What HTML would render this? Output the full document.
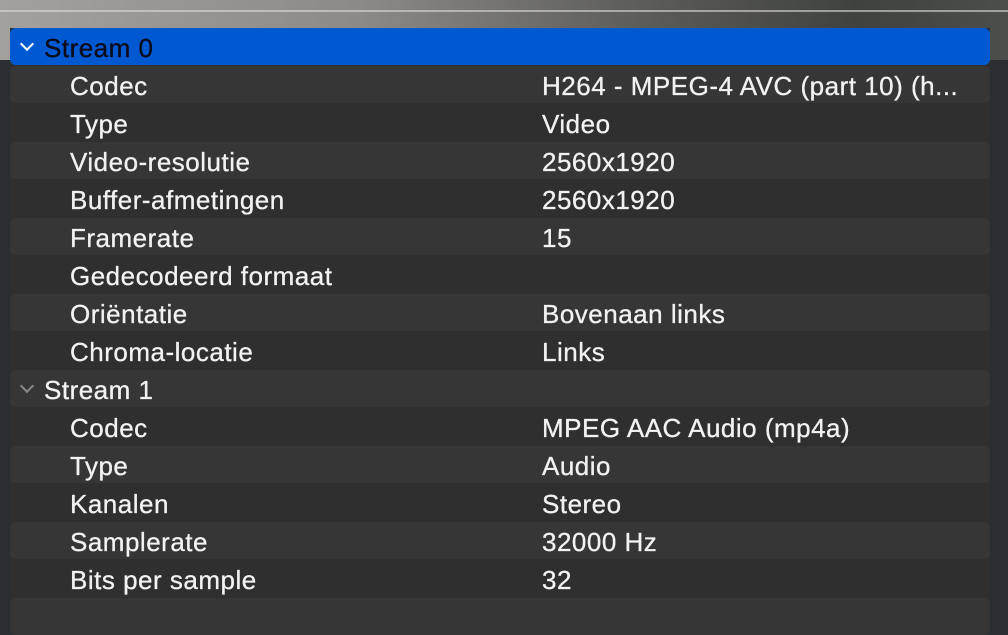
<!DOCTYPE html>
<html><head><meta charset="utf-8"><style>
html,body{margin:0;width:1008px;height:630px;overflow:hidden;background:#2b2e31;font-family:"Liberation Sans",sans-serif;}
.top{position:absolute;left:0;top:0;width:1008px;height:60px;background:linear-gradient(90deg,#a3a19c 0%,#8d8b86 35%,#5a5a56 65%,#3f423f 85%,#4a4f4c 100%);}
.line{position:absolute;left:0;top:10px;width:1008px;height:2px;background:rgba(220,220,215,.6);}
.panel{position:absolute;left:10px;top:28px;width:980px;height:602px;background:#2f2f2f;}
.row{position:absolute;left:10px;width:980px;height:37px;border-radius:6px;color:#f2f2f2;font-size:26px;letter-spacing:0.5px;line-height:41px;-webkit-text-stroke:0.3px currentColor;}
.alt{background:#363636;}
.sel{background:#0059d1;color:#0b0b1a;}
.l{position:absolute;left:60px;}
.v{position:absolute;left:532px;}
.s{position:absolute;left:34px;}
.chev{position:absolute;left:12px;width:8px;height:8px;border-right:2px solid #fff;border-bottom:2px solid #fff;transform:rotate(45deg);top:11px;}
.chev.g{border-color:#8a8a8a;}
</style></head><body>
<div class="top"></div><div class="line"></div>
<div class="panel"></div>
<div class="row sel" style="top:28px"><div class="chev"></div><span class="s">Stream 0</span></div>
<div class="row alt" style="top:66px"><span class="l">Codec</span><span class="v">H264 - MPEG-4 AVC (part 10) (h...</span></div>
<div class="row" style="top:104px"><span class="l">Type</span><span class="v">Video</span></div>
<div class="row alt" style="top:142px"><span class="l">Video-resolutie</span><span class="v">2560x1920</span></div>
<div class="row" style="top:180px"><span class="l">Buffer-afmetingen</span><span class="v">2560x1920</span></div>
<div class="row alt" style="top:218px"><span class="l">Framerate</span><span class="v">15</span></div>
<div class="row" style="top:256px"><span class="l">Gedecodeerd formaat</span></div>
<div class="row alt" style="top:294px"><span class="l">Oriëntatie</span><span class="v">Bovenaan links</span></div>
<div class="row" style="top:332px"><span class="l">Chroma-locatie</span><span class="v">Links</span></div>
<div class="row alt" style="top:370px"><div class="chev g"></div><span class="s">Stream 1</span></div>
<div class="row" style="top:408px"><span class="l">Codec</span><span class="v">MPEG AAC Audio (mp4a)</span></div>
<div class="row alt" style="top:446px"><span class="l">Type</span><span class="v">Audio</span></div>
<div class="row" style="top:484px"><span class="l">Kanalen</span><span class="v">Stereo</span></div>
<div class="row alt" style="top:522px"><span class="l">Samplerate</span><span class="v">32000 Hz</span></div>
<div class="row" style="top:560px"><span class="l">Bits per sample</span><span class="v">32</span></div>
<div class="row alt" style="top:598px"></div>
</body></html>
